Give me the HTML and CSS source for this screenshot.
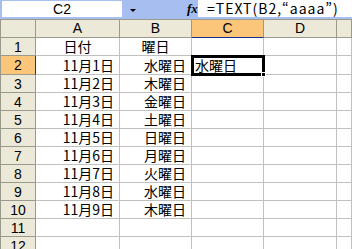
FILE: index.html
```html
<!DOCTYPE html>
<html lang="ja">
<head>
<meta charset="utf-8">
<link rel="stylesheet" href="styles.css">
</head>
<body>
<div class="app">
  <div class="fbar">
    <div class="namebox">C2</div>
    <div class="dd"><span class="tri"></span></div>
    <div class="fx">fx</div>
    <div class="formula">=TEXT(B2,“aaaa”)</div>
  </div>
  <div class="sheet">
    <div class="hd corner"></div>
    <div class="hd col">A</div>
    <div class="hd col">B</div>
    <div class="hd col sel">C</div>
    <div class="hd col">D</div>
    <div class="hd col"></div>

    <div class="hd row">1</div>
    <div class="c ctr">日付</div>
    <div class="c ctr">曜日</div>
    <div class="c"></div><div class="c"></div><div class="c"></div>

    <div class="hd row sel r2">2</div>
    <div class="c r r2">11月1日</div>
    <div class="c r r2">水曜日</div>
    <div class="c r2 active">水曜日<span class="box"><span class="handle"></span></span></div>
    <div class="c r2"></div><div class="c r2"></div>

    <div class="hd row">3</div>
    <div class="c r">11月2日</div><div class="c r">木曜日</div>
    <div class="c"></div><div class="c"></div><div class="c"></div>

    <div class="hd row">4</div>
    <div class="c r">11月3日</div><div class="c r">金曜日</div>
    <div class="c"></div><div class="c"></div><div class="c"></div>

    <div class="hd row">5</div>
    <div class="c r">11月4日</div><div class="c r">土曜日</div>
    <div class="c"></div><div class="c"></div><div class="c"></div>

    <div class="hd row">6</div>
    <div class="c r">11月5日</div><div class="c r">日曜日</div>
    <div class="c"></div><div class="c"></div><div class="c"></div>

    <div class="hd row">7</div>
    <div class="c r">11月6日</div><div class="c r">月曜日</div>
    <div class="c"></div><div class="c"></div><div class="c"></div>

    <div class="hd row">8</div>
    <div class="c r">11月7日</div><div class="c r">火曜日</div>
    <div class="c"></div><div class="c"></div><div class="c"></div>

    <div class="hd row">9</div>
    <div class="c r">11月8日</div><div class="c r">水曜日</div>
    <div class="c"></div><div class="c"></div><div class="c"></div>

    <div class="hd row">10</div>
    <div class="c r">11月9日</div><div class="c r">木曜日</div>
    <div class="c"></div><div class="c"></div><div class="c"></div>

    <div class="hd row">11</div>
    <div class="c"></div><div class="c"></div>
    <div class="c"></div><div class="c"></div><div class="c"></div>

    <div class="hd row">12</div>
    <div class="c"></div><div class="c"></div>
    <div class="c"></div><div class="c"></div><div class="c"></div>
  </div>
</div>
</body>
</html>
```

FILE: styles.css
```css
* { box-sizing: border-box; }
html, body { margin: 0; padding: 0; background: #fff; }
body { width: 352px; height: 249px; overflow: hidden; }

.app {
  width: 352px;
  height: 249px;
  overflow: hidden;
  font-family: "Noto Sans CJK JP", sans-serif;
  font-size: 14px;
  color: #000;
}

.fbar {
  height: 19px;
  background: #a6bff0;
  display: flex;
  align-items: flex-start;
  padding-top: 1px;
}
.namebox {
  margin-left: 2px;
  width: 120px;
  height: 16px;
  background: #fff;
  font-family: "Liberation Sans", sans-serif;
  font-size: 14px;
  line-height: 16px;
  text-align: center;
}
.dd {
  width: 24px;
  height: 16px;
  display: flex;
  align-items: center;
  padding-left: 8px;
}
.tri {
  width: 0;
  height: 0;
  border-left: 3px solid transparent;
  border-right: 3px solid transparent;
  border-top: 3px solid #000;
  margin-top: 3px;
}
.fx {
  margin-left: 41px;
  width: 12px;
  height: 16px;
  font-family: "Liberation Serif", serif;
  font-style: italic;
  font-weight: bold;
  font-size: 13px;
  line-height: 16px;
}
.formula {
  flex: 1;
  margin-left: -1px;
  margin-top: -1px;
  height: 17px;
  background: #fff;
  padding-left: 9px;
  font-size: 14px;
  line-height: 17px;
  letter-spacing: 1px;
  white-space: nowrap;
  overflow: hidden;
}

.sheet {
  display: grid;
  grid-template-columns: 36px 84px 72px 72px 73px 1fr;
  grid-template-rows: 19px 18px 19px repeat(10, 18px);
}

.hd {
  background: #ece9d8;
  border-right: 1px solid #9a9a8c;
  border-bottom: 1px solid #9a9a8c;
  font-family: "Liberation Sans", sans-serif;
  font-size: 14px;
  display: flex;
  align-items: center;
  justify-content: center;
}
.col { border-top: 1px solid #9a9a8c; line-height: 17px; }
.corner { border-top: 1px solid #9a9a8c; border-left: 1px solid #9a9a8c; }
.row { border-left: 1px solid #9a9a8c; }
.hd.col.sel { background: #fbc57a; border-bottom-color: #1c2e8c; }
.hd.row.sel { background: #fbc57a; border-right-color: #1c2e8c; }

.c {
  border-right: 1px solid #c0c0c0;
  border-bottom: 1px solid #c0c0c0;
  display: flex;
  align-items: center;
  padding: 0 3px;
  white-space: nowrap;
  line-height: 17px;
}
.c.r { justify-content: flex-end; padding-right: 5px; }
.c.ctr { justify-content: center; }

.active { position: relative; padding-left: 3px; }
.box {
  position: absolute;
  left: -1px;
  top: -1px;
  right: -2px;
  bottom: -2px;
  border: 3px solid #000;
}
.handle {
  position: absolute;
  right: -4px;
  bottom: -4px;
  width: 5px;
  height: 5px;
  background: #000;
  border: 1px solid #fff;
}
```
